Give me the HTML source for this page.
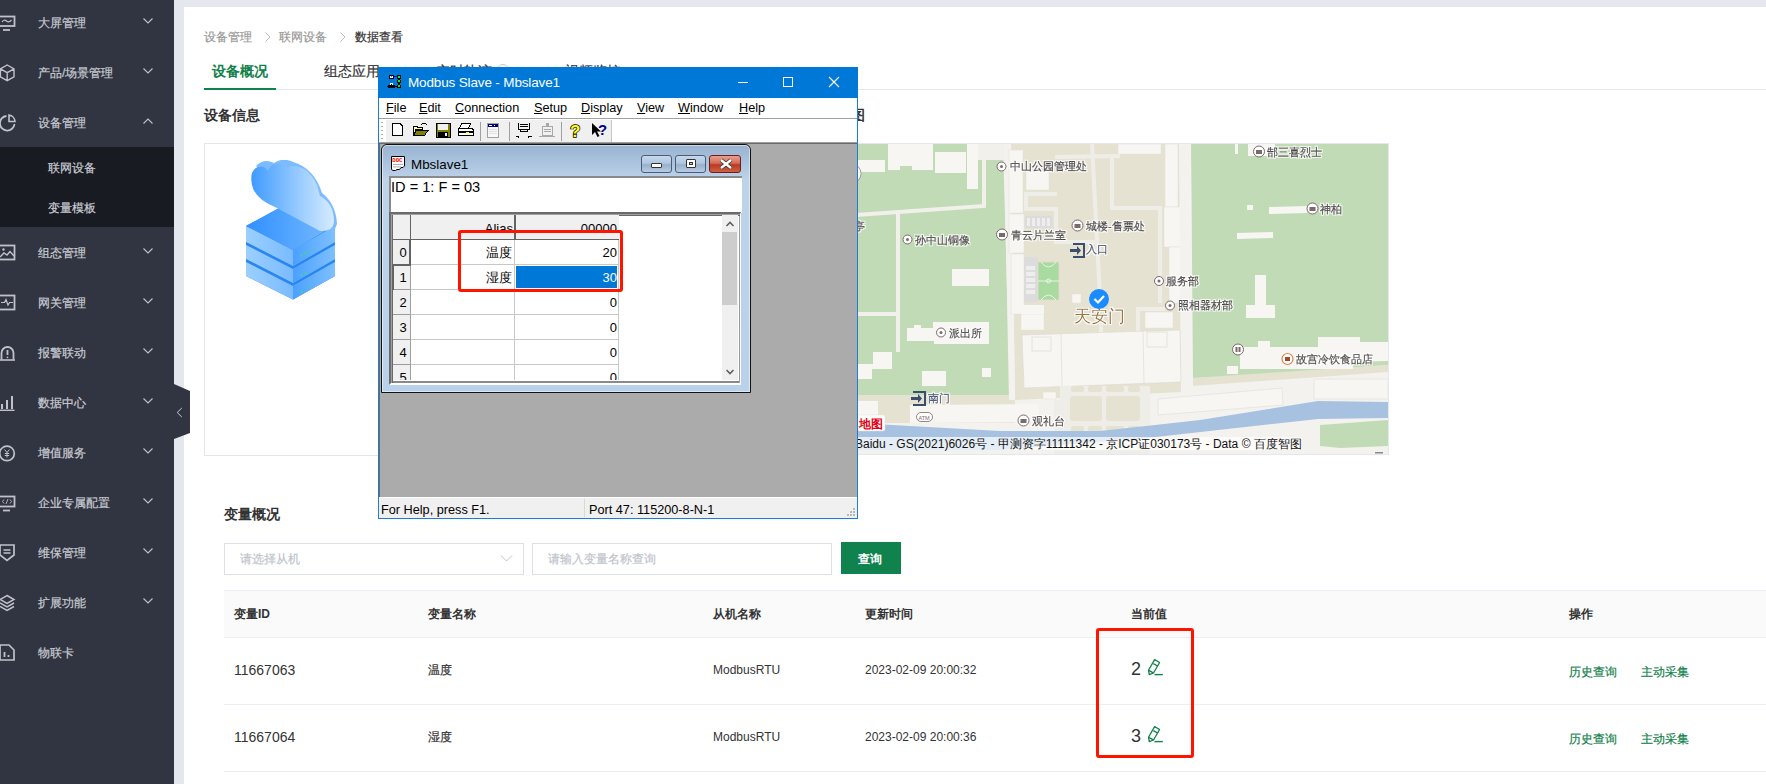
<!DOCTYPE html>
<html><head><meta charset="utf-8">
<style>
*{box-sizing:border-box}
html,body{margin:0;padding:0}
body{width:1766px;height:784px;overflow:hidden;position:relative;background:#e4e7ee;font-family:"Liberation Sans",sans-serif;color:#333}
.a{position:absolute;white-space:nowrap}
#side{position:absolute;left:0;top:0;width:174px;height:784px;background:#313541}
.mi{position:absolute;left:38px;font-size:12px;color:#c9ccd3;line-height:16px}
.chev{position:absolute;left:143px;width:10px;height:6px}
.ico{position:absolute;left:-1px;width:17px;height:17px}
#card{position:absolute;left:184px;top:7px;width:1582px;height:777px;background:#fff}
.th{top:606px;font-size:12px;font-weight:bold;color:#333}
.mn{top:101px;font-size:12.7px;color:#000}
.st{top:503px;font-size:12.7px;color:#000}
.cb{top:155px;width:31px;height:18px;border:1px solid #4a5c78;border-radius:3px;background:linear-gradient(#c8d8ec,#b0c6e0 45%,#98b0cc 55%,#b8cce4)}
.cj{-webkit-text-stroke:0.2px currentColor}
</style></head><body>
<div id="side">
  <div style="position:absolute;left:0;top:147px;width:174px;height:80px;background:#181b22"></div>
  
<svg class="a" style="left:0;top:0" width="174" height="784" viewBox="0 0 174 784" fill="none" stroke="#bfc2ca" stroke-width="1.6">
 <!-- chevrons -->
 <g stroke-width="1.1">
 <path d="M143.5,18.5 L148,23 L152.5,18.5"/>
 <path d="M143.5,68.5 L148,73 L152.5,68.5"/>
 <path d="M143.5,123.5 L148,119 L152.5,123.5"/>
 <path d="M143.5,248.5 L148,253 L152.5,248.5"/>
 <path d="M143.5,298.5 L148,303 L152.5,298.5"/>
 <path d="M143.5,348.5 L148,353 L152.5,348.5"/>
 <path d="M143.5,398.5 L148,403 L152.5,398.5"/>
 <path d="M143.5,448.5 L148,453 L152.5,448.5"/>
 <path d="M143.5,498.5 L148,503 L152.5,498.5"/>
 <path d="M143.5,548.5 L148,553 L152.5,548.5"/>
 <path d="M143.5,598.5 L148,603 L152.5,598.5"/>
 </g>
 <!-- monitor wave -->
 <rect x="-1" y="16.5" width="15.5" height="9.5" stroke-width="1.8"/>
 <path d="M2,22 Q4,19 6.5,21 Q9,23 11.5,20" stroke-width="1.2"/>
 <path d="M3,30 H10" stroke-width="1.8"/>
 <!-- cube -->
 <path d="M7.2,65 L14,68.8 V76.8 L7.2,80.6 L0.4,76.8 V68.8 Z M0.4,68.8 L7.2,72.6 L14,68.8 M7.2,72.6 V80.6" stroke-width="1.4"/>
 <!-- pie -->
 <path d="M6.5,116 A7.3,7.3 0 1 0 14.5,124" stroke-width="1.8"/>
 <path d="M9,115 V121.5 H15 A7,7 0 0 0 9,115 Z" stroke-width="1.6"/>
 <!-- image -->
 <rect x="-1" y="245.5" width="15.5" height="14" stroke-width="1.8"/>
 <circle cx="3.5" cy="249.5" r="1.2" fill="#bfc2ca" stroke="none"/>
 <path d="M0,257 L4,253 L7,255 L10,251.5 L14,256" stroke-width="1.4"/>
 <!-- pulse monitor -->
 <rect x="-1" y="295.5" width="15.5" height="14" stroke-width="1.8"/>
 <path d="M1,302.5 H4.5 L6,299.5 L8,305 L9.5,302.5 H13" stroke-width="1.2"/>
 <!-- alarm -->
 <path d="M1.5,359.5 V353 A6,6 0 0 1 13.5,353 V359.5" stroke-width="1.8"/>
 <path d="M-1,360 H15" stroke-width="1.6"/>
 <path d="M7.5,350 V355" stroke-width="1.8"/><circle cx="7.5" cy="357.3" r="0.9" fill="#bfc2ca" stroke="none"/>
 <!-- bars -->
 <path d="M2,409 V404 M7,409 V400 M12,409 V396" stroke-width="2"/>
 <path d="M-1,410.3 H14.5" stroke-width="1.4"/>
 <!-- yen circle -->
 <circle cx="7" cy="453.4" r="7.3" stroke-width="1.7"/>
 <path d="M4.5,449.5 L7,452.5 L9.5,449.5 M7,452.5 V457.5 M4.8,453.5 H9.2 M4.8,455.5 H9.2" stroke-width="1"/>
 <!-- code monitor -->
 <rect x="-1" y="496.5" width="15.5" height="10" stroke-width="1.8"/>
 <path d="M3,510.5 H10" stroke-width="1.8"/>
 <path d="M4,499.5 L2.5,501.5 L4,503.5 M10,499.5 L11.5,501.5 L10,503.5 M8,499 L6,504" stroke-width="0.9"/>
 <!-- shield -->
 <path d="M0,545 H14 V555 L7,560.5 L0,555 Z" stroke-width="1.7"/>
 <path d="M3.5,550 H10.5 M3.5,553 H10.5" stroke-width="1.3"/>
 <!-- layers -->
 <path d="M7,595.5 L14,599.5 L7,603.5 L0,599.5 Z" stroke-width="1.5"/>
 <path d="M0,603 L7,607 L14,603 M0,606.5 L7,610.5 L14,606.5" stroke-width="1.5"/>
 <!-- sim -->
 <path d="M0,645 H9 L14,650 V660 H0 Z" stroke-width="1.7"/>
 <path d="M4.5,652 V657 M8.5,655 V657" stroke-width="1.8"/>
</svg>
<div class="mi cj" style="top:15px">大屏管理</div>
  <div class="mi cj" style="top:65px">产品/场景管理</div>
  <div class="mi cj" style="top:115px">设备管理</div>
  <div class="mi cj" style="top:160px;left:48px">联网设备</div>
  <div class="mi cj" style="top:200px;left:48px">变量模板</div>
  <div class="mi cj" style="top:245px">组态管理</div>
  <div class="mi cj" style="top:295px">网关管理</div>
  <div class="mi cj" style="top:345px">报警联动</div>
  <div class="mi cj" style="top:395px">数据中心</div>
  <div class="mi cj" style="top:445px">增值服务</div>
  <div class="mi cj" style="top:495px">企业专属配置</div>
  <div class="mi cj" style="top:545px">维保管理</div>
  <div class="mi cj" style="top:595px">扩展功能</div>
  <div class="mi cj" style="top:645px">物联卡</div>
</div>

<div id="card"></div>
<!-- handle -->
<svg class="a" style="left:174px;top:384px" width="17" height="56" viewBox="0 0 17 56"><polygon points="0,0 16,7 16,49 0,55" fill="#313541"/><path d="M7.8,24 L3.2,28.5 L7.8,33" fill="none" stroke="#c9ccd3" stroke-width="1"/></svg>
<!-- breadcrumb -->
<div class="a cj" style="left:204px;top:29px;font-size:12px;color:#999">设备管理</div>
<svg class="a" style="left:264px;top:31px" width="8" height="12"><path d="M1.5,1.5 L6,6 L1.5,10.5" fill="none" stroke="#bbb" stroke-width="1"/></svg>
<div class="a cj" style="left:279px;top:29px;font-size:12px;color:#999">联网设备</div>
<svg class="a" style="left:339px;top:31px" width="8" height="12"><path d="M1.5,1.5 L6,6 L1.5,10.5" fill="none" stroke="#bbb" stroke-width="1"/></svg>
<div class="a cj" style="left:355px;top:29px;font-size:12px;color:#333">数据查看</div>
<!-- tabs -->
<div class="a" style="left:204px;top:89px;width:1562px;height:1px;background:#e4e7ed"></div>
<div class="a" style="left:204px;top:88px;width:72px;height:2px;background:#13814b"></div>
<div class="a" style="left:212px;top:62.5px;font-size:14px;font-weight:bold;color:#13814b">设备概况</div>
<div class="a cj" style="left:324px;top:63px;font-size:14px;color:#333">组态应用</div>
<div class="a cj" style="left:436px;top:63px;font-size:14px;color:#333">实时轨迹</div>
<div class="a" style="left:497px;top:64px;width:12px;height:12px;border-radius:6px;border:1.5px solid #c8c8c8"></div>
<div class="a cj" style="left:565px;top:63px;font-size:14px;color:#333">视频监控</div>
<div class="a" style="left:204px;top:107px;font-size:14px;font-weight:bold;color:#333">设备信息</div>
<div class="a" style="left:809px;top:107px;font-size:14px;font-weight:bold;color:#333">设备地图</div>
<!-- device box -->
<div class="a" style="left:204px;top:143px;width:652px;height:313px;border:1px solid #e6e6e6"></div>
<div class="a" style="left:855px;top:143px;width:534px;height:312px;border:1px solid #e4e6f0"></div>
<svg class="a" style="left:856px;top:144px" width="532" height="310" viewBox="856 144 532 310">
<defs>
<filter id="halo" x="-10%" y="-30%" width="120%" height="160%"><feMorphology in="SourceAlpha" operator="dilate" radius="1" result="d"/><feFlood flood-color="#fff" flood-opacity="0.9"/><feComposite in2="d" operator="in" result="w"/><feMerge><feMergeNode in="w"/><feMergeNode in="SourceGraphic"/></feMerge></filter>
</defs>
<!-- base off-white -->
<rect x="856" y="144" width="532" height="310" fill="#f4f2ee"/>
<!-- left green park -->
<polygon points="856,144 1003,144 1010,395 856,395" fill="#c1dbb7"/>
<!-- central beige -->
<polygon points="1011,144 1180,144 1181,392 1015,400" fill="#e6e2d2"/>
<!-- right green -->
<polygon points="1191,144 1388,144 1388,365 1224,377 1193,378" fill="#c1dbb7"/>
<!-- beige strips -->
<polygon points="1193,378 1388,365 1388,372 1193,386" fill="#e6e2d2"/>
<polygon points="856,395 1010,395 1015,400 1015,423 856,423" fill="#e6e2d2"/>
<!-- top-left off-white -->
<polygon points="978,144 1004,144 1004,160 978,160" fill="#f2f0eb"/>
<!-- left park buildings -->
<g fill="#f7f6f3">
<rect x="858" y="160" width="27" height="12"/>
<polygon points="888,144 933,144 933,170 912,170 912,166 900,166 900,170 888,170"/>
<rect x="935" y="152" width="31" height="21"/>
<rect x="967" y="144" width="11" height="45"/>
<rect x="952" y="269" width="37" height="17"/>
<polygon points="907,328 914,328 914,325 921,325 921,328 933,328 933,322 989,322 989,344 934,344 934,341 907,341"/>
<polygon points="873,352 892,352 892,369 872,369 872,379 858,379 858,364 873,364"/>
<rect x="922" y="371" width="24" height="15"/>
<rect x="982" y="368" width="9" height="9"/>
<rect x="858" y="401" width="20" height="15"/>
</g>
<!-- left park roads -->
<g stroke="#f2f0eb" stroke-width="4" fill="none">
<path d="M856,215 L984,206 L984,144"/>
<path d="M898,213 L898,352"/>
<path d="M856,314 L898,314"/>
</g>
<!-- column between green & beige -->
<polygon points="1004,144 1011,144 1015,400 1009,400" fill="#f4f2ee"/>
<g fill="#f7f6f3" stroke="#e4e0d6" stroke-width="0.5">
<rect x="1009" y="150" width="14" height="63"/>
<rect x="1009" y="214" width="15" height="39"/>
<rect x="1011" y="254" width="13" height="60"/>
<rect x="1021" y="314" width="23" height="16"/>
<rect x="1165" y="144" width="13" height="63"/>
<rect x="1164" y="207" width="17" height="40"/>
<rect x="1169" y="247" width="12" height="56"/>
<rect x="1026" y="171" width="23" height="19"/>
<rect x="1118" y="144" width="43" height="10"/>
<rect x="1072" y="294" width="9" height="9"/>
<rect x="1145" y="312" width="28" height="16"/>
<rect x="1043" y="392" width="13" height="7"/>
</g>
<!-- right strip off-white -->
<polygon points="1179,144 1185,144 1191,160 1192,378 1181,392" fill="#f4f2ee"/>
<!-- beige roads -->
<g stroke="#efede8" stroke-width="4" fill="none">
<path d="M1055,157 L1120,156"/>
<path d="M1092,144 L1100,298"/>
<path d="M1112,156 L1112,208 L1160,208 L1160,303"/>
<path d="M1057,194 L1026,194 L1026,209 L1056,209 L1056,242 L1097,242"/>
<path d="M1101,322 L1101,334"/>
<path d="M1138,332 L1138,309 L1165,309"/>
</g>
<!-- parking & court -->
<rect x="1025" y="216" width="27" height="12" fill="#dcdcdc"/>
<g fill="#eeeeee"><rect x="1027" y="218" width="3" height="8"/><rect x="1032" y="218" width="3" height="8"/><rect x="1037" y="218" width="3" height="8"/><rect x="1042" y="218" width="3" height="8"/><rect x="1047" y="218" width="3" height="8"/></g>
<rect x="1024" y="257" width="14" height="45" fill="#dcdcdc"/>
<g fill="#eeeeee"><rect x="1026" y="266" width="9" height="4"/><rect x="1026" y="272" width="9" height="4"/><rect x="1026" y="278" width="9" height="4"/><rect x="1026" y="284" width="9" height="4"/><rect x="1026" y="290" width="9" height="4"/></g>
<rect x="1038" y="262" width="21" height="38" fill="#a9dba0" stroke="#e8d8d0" stroke-width="0.8"/>
<g stroke="#fff" stroke-width="0.7" fill="none"><path d="M1038,281 H1059"/><circle cx="1048.5" cy="281" r="2"/><path d="M1041,262 Q1048.5,272 1056,262"/><path d="M1041,300 Q1048.5,290 1056,300"/></g>
<!-- big tiananmen building -->
<g fill="#f7f6f3" stroke="#dcd8cc" stroke-width="0.6">
<polygon points="1022,335 1180,330 1181,382 1024,388"/>
<path d="M1061,333 L1062,387" fill="none"/>
<path d="M1143,331 L1144,383" fill="none"/>
<rect x="1032" y="337" width="19" height="14"/>
<rect x="1147" y="332" width="20" height="15"/>
</g>
<!-- light road grid below -->
<rect x="1060" y="386" width="90" height="68" fill="#efede8"/>
<g fill="#e6e2d2">
<rect x="1071" y="386" width="13" height="6" rx="2"/><rect x="1088" y="386" width="14" height="6" rx="2"/><rect x="1106" y="386" width="18" height="6" rx="2"/><rect x="1128" y="386" width="12" height="6" rx="2"/>
<rect x="1070" y="396" width="32" height="25" rx="3"/><rect x="1106" y="396" width="34" height="25" rx="3"/>
<rect x="1071" y="426" width="13" height="8" rx="2"/><rect x="1088" y="426" width="14" height="8" rx="2"/><rect x="1106" y="426" width="18" height="8" rx="2"/><rect x="1128" y="426" width="12" height="8" rx="2"/>
</g>
<rect x="1054" y="400" width="6" height="54" fill="#efede8"/>
<!-- right green buildings -->
<g fill="#f7f6f3">
<rect x="1248" y="144" width="27" height="12"/>
<rect x="1235" y="144" width="3" height="10"/>
<rect x="1247" y="205" width="6" height="5"/>
<polygon points="1269,207 1307,206 1307,213 1269,214"/>
<polygon points="1237,233 1273,232 1273,238 1237,239"/>
<rect x="1255" y="275" width="11" height="30"/>
<rect x="1246" y="305" width="29" height="13"/>
<polygon points="1240,347 1258,347 1258,341 1270,341 1270,347 1318,347 1318,337 1360,337 1360,342 1388,342 1388,361 1353,362 1353,369 1240,369"/>
<rect x="1227" y="366" width="11" height="8"/>
<polygon points="1158,399 1282,388 1283,405 1158,415" stroke="#e0ddd5" stroke-width="0.6"/>
<rect x="1314" y="379" width="74" height="20" stroke="#e0ddd5" stroke-width="0.6"/>
<polygon points="910,405 1039,404 1039,422 910,423"/>
<rect x="1021" y="305" width="23" height="9"/>
</g>
<!-- river -->
<polygon points="856,423 1000,431 1100,431 1146,426 1200,420 1318,401 1388,402 1388,418 1318,419 1147,438 1000,450 856,450" fill="#a7c1e0"/>
<polygon points="1320,425 1388,420 1388,446 1340,448 1320,446" fill="#c1dbb7"/>
<!-- attribution band -->
<rect x="856" y="437" width="446" height="13" fill="#fff" fill-opacity="0.7"/>
<text x="855" y="448" font-family="Liberation Sans" font-size="12" fill="#111">Baidu - GS(2021)6026号 - 甲测资字11111342 - 京ICP证030173号 - Data © 百度智图</text>
<rect x="1375" y="452" width="8" height="1.5" fill="#888"/>
<!-- ditu logo -->
<rect x="857" y="415" width="28" height="16" rx="2" fill="#fff" stroke="#ddd" stroke-width="0.5"/>
<text x="859" y="428" font-family="Liberation Sans" font-weight="bold" font-size="11.5" fill="#e60012">地图</text>
<!-- map control circle (clipped) -->
<circle cx="851" cy="173.5" r="10" fill="#fff" stroke="#888" stroke-width="0.8"/>
<!-- POIs -->
<g fill="#fff" stroke="#7a6a6a" stroke-width="1">
<circle cx="1001.5" cy="166.5" r="4.5"/><circle cx="907.5" cy="239.5" r="4.5"/><circle cx="941" cy="332.5" r="4.5"/>
<circle cx="1159" cy="281" r="4.5"/><circle cx="1170" cy="305.5" r="4.5"/>
<circle cx="1002" cy="234.5" r="5.5"/><circle cx="1077.5" cy="225.5" r="5.5"/><circle cx="1259" cy="151.5" r="5.5"/><circle cx="1312.5" cy="208.5" r="5.5"/><circle cx="1023.5" cy="420.5" r="5.5"/><circle cx="1238" cy="349.5" r="5.5"/>
</g>
<g fill="#7a6a6a"><circle cx="1001.5" cy="166.5" r="1.5"/><circle cx="907.5" cy="239.5" r="1.5"/><circle cx="941" cy="332.5" r="1.5"/><circle cx="1159" cy="281" r="1.5"/><circle cx="1170" cy="305.5" r="1.5"/>
<rect x="999" y="233" width="6" height="4"/><rect x="1074.5" y="224" width="6" height="4"/><rect x="1256" y="150" width="6" height="4"/><rect x="1309.5" y="207" width="6" height="4"/><rect x="1020.5" y="419" width="6" height="4"/><rect x="1235.5" y="347" width="2" height="5"/><rect x="1238.5" y="347" width="2" height="5"/></g>
<circle cx="1287.5" cy="359" r="5.5" fill="#fff" stroke="#d9824a" stroke-width="1.2"/><rect x="1285" y="357" width="5" height="4" fill="#a04a2a"/>
<rect x="916.5" y="412.5" width="16" height="9" rx="4.5" fill="#fff" stroke="#7a6a6a" stroke-width="0.8"/>
<text x="918.5" y="419.5" font-family="Liberation Sans" font-size="5.5" fill="#7a6a6a">ATM</text>
<!-- entrance icons -->
<g fill="none" stroke="#3c4e6e" stroke-width="2"><path d="M1073,244 H1084 V257 H1073"/><path d="M913,392 H925 V405 H913"/></g>
<g fill="#3c4e6e"><path d="M1070,249 H1077 V246 L1081,250.5 L1077,255 V252 H1070 Z"/><path d="M911,397 H918 V394 L922,398.5 L918,403 V400 H911 Z"/></g>
<!-- labels -->
<g font-family="Liberation Sans" font-size="11" fill="#4a4242" stroke="#4a4242" stroke-width="0.35" filter="url(#halo)">
<text x="1010" y="170">中山公园管理处</text>
<text x="915" y="243.5">孙中山铜像</text>
<text x="1011" y="238.5">青云片兰室</text>
<text x="1086" y="229.5">城楼-售票处</text>
<text x="1267" y="155.5">郜三喜烈士</text>
<text x="1320" y="212.5">神柏</text>
<text x="1166" y="285">服务部</text>
<text x="1178" y="309">照相器材部</text>
<text x="949" y="336.5">派出所</text>
<text x="1032" y="424.5">观礼台</text>
<text x="1296" y="362.5">故宫冷饮食品店</text>
<text x="854" y="229.5">亭</text>
<text x="1086" y="253" fill="#4a5a7a" stroke="#4a5a7a">入口</text>
<text x="928" y="401.5" fill="#4a5a7a" stroke="#4a5a7a">南门</text>
</g>
<text x="1074" y="321.5" font-family="Liberation Sans" font-size="17" fill="#9c7430" filter="url(#halo)">天安门</text>
<circle cx="1099" cy="299" r="10" fill="#1a8cff"/>
<path d="M1094.5,299 L1098,302.5 L1104,296" fill="none" stroke="#fff" stroke-width="2.2"/>
</svg>


<svg class="a" style="left:244px;top:160px" width="94" height="142" viewBox="244 160 94 142">
<defs>
<linearGradient id="gTop" x1="0" y1="0" x2="1" y2="0"><stop offset="0" stop-color="#2f90ff"/><stop offset="1" stop-color="#78bbff"/></linearGradient>
<linearGradient id="gL" x1="0" y1="0" x2="1" y2="0"><stop offset="0" stop-color="#9ccfff"/><stop offset="1" stop-color="#5aaaff"/></linearGradient>
<linearGradient id="gR" x1="0" y1="0" x2="1" y2="0"><stop offset="0" stop-color="#4aa0ff"/><stop offset="1" stop-color="#7fc0ff"/></linearGradient>
<linearGradient id="gC" x1="0" y1="0" x2="1" y2="0"><stop offset="0" stop-color="#3f9bff"/><stop offset="0.6" stop-color="#9ccdff"/><stop offset="1" stop-color="#d6ebff"/></linearGradient>
</defs>
<!-- slabs from bottom -->
<g>
 <path d="M246,226 L290,202 L335,225 V276 L293,299.5 L246,276 Z" fill="#2a86f0"/>
 <path d="M246,262 L293,286 L335,262 V276 L293,299.5 L246,276 Z" fill="url(#gL)"/>
 <path d="M293,286 L335,262 V276 L293,299.5 Z" fill="url(#gR)"/>
 <path d="M246,245 L293,269 L335,245 V259 L293,283 L246,259 Z" fill="url(#gL)"/>
 <path d="M293,269 L335,245 V259 L293,283 Z" fill="url(#gR)"/>
 <path d="M246,226 L293,250 L335,226 V242 L293,266 L246,242 Z" fill="url(#gL)"/>
 <path d="M293,250 L335,226 V242 L293,266 Z" fill="url(#gR)"/>
 <path d="M246,226 L290,202 L335,225 L293,250 Z" fill="url(#gTop)"/>
</g>
<g fill="#3ddc84">
 <circle cx="301.5" cy="255.5" r="1.1"/><circle cx="305.5" cy="253.3" r="1.1"/><circle cx="309.5" cy="251" r="1.1"/>
 <circle cx="301.5" cy="275" r="1.1"/><circle cx="305.5" cy="273" r="1.1"/>
 <circle cx="301.5" cy="291.5" r="1.1"/><circle cx="309.5" cy="287.5" r="1.1"/>
</g>
<!-- cloud side thickness -->
<path d="M256,166 Q264,158 274,163 Q283,157 293,162 Q314,168 322,193 Q336,204 337,224 L335,229 L321,228 Z" fill="#7dbbff"/>
<!-- cloud front -->
<path d="M275,207 Q255,199 252,185 Q249,170 258,167 Q265,165 268,171 Q272,161 282,165 Q286,165 287,167 Q306,162 317,185 Q319,192 320,196 Q334,203 334,222 Q333,232 320,231 Z" fill="url(#gC)"/>
</svg>

<!-- section 2 -->
<div class="a" style="left:224px;top:506px;font-size:14px;font-weight:bold;color:#333">变量概况</div>
<div class="a" style="left:224px;top:543px;width:300px;height:32px;border:1px solid #dcdfe6"></div>
<div class="a cj" style="left:240px;top:551px;font-size:12px;color:#c0c4cc">请选择从机</div>
<svg class="a" style="left:500px;top:554px" width="13" height="9"><path d="M1,1.5 L6.5,7 L12,1.5" fill="none" stroke="#c0c4cc" stroke-width="1"/></svg>
<div class="a" style="left:532px;top:543px;width:300px;height:32px;border:1px solid #dcdfe6"></div>
<div class="a cj" style="left:548px;top:551px;font-size:12px;color:#c0c4cc">请输入变量名称查询</div>
<div class="a" style="left:841px;top:542px;width:60px;height:32px;background:#10824d"></div>
<div class="a" style="left:858px;top:551px;font-size:12px;font-weight:bold;color:#fff">查询</div>
<!-- table -->
<div class="a" style="left:224px;top:590px;width:1542px;height:48px;background:#fafafa;border-top:1px solid #ebeef5;border-bottom:1px solid #ebeef5"></div>
<div class="a" style="left:224px;top:704px;width:1542px;height:1px;background:#ebeef5"></div>
<div class="a" style="left:224px;top:771px;width:1542px;height:1px;background:#ebeef5"></div>
<div class="a th" style="left:234px">变量ID</div>
<div class="a th" style="left:428px">变量名称</div>
<div class="a th" style="left:713px">从机名称</div>
<div class="a th" style="left:865px">更新时间</div>
<div class="a th" style="left:1131px">当前值</div>
<div class="a th" style="left:1569px">操作</div>
<div class="a" style="left:234px;top:662px;font-size:14px;color:#333">11667063</div>
<div class="a cj" style="left:428px;top:662px;font-size:12px;color:#333">温度</div>
<div class="a" style="left:713px;top:663px;font-size:12px;color:#333">ModbusRTU</div>
<div class="a" style="left:865px;top:663px;font-size:12px;color:#333">2023-02-09 20:00:32</div>
<div class="a" style="left:1131px;top:659px;font-size:18px;color:#333">2</div>
<div class="a cj" style="left:1569px;top:664px;font-size:12px;color:#13814b">历史查询</div>
<div class="a cj" style="left:1641px;top:664px;font-size:12px;color:#13814b">主动采集</div>
<div class="a" style="left:234px;top:729px;font-size:14px;color:#333">11667064</div>
<div class="a cj" style="left:428px;top:729px;font-size:12px;color:#333">湿度</div>
<div class="a" style="left:713px;top:730px;font-size:12px;color:#333">ModbusRTU</div>
<div class="a" style="left:865px;top:730px;font-size:12px;color:#333">2023-02-09 20:00:36</div>
<div class="a" style="left:1131px;top:726px;font-size:18px;color:#333">3</div>
<div class="a cj" style="left:1569px;top:731px;font-size:12px;color:#13814b">历史查询</div>
<div class="a cj" style="left:1641px;top:731px;font-size:12px;color:#13814b">主动采集</div>

<svg class="a" style="left:1144px;top:656px" width="22" height="22" viewBox="1144 656 22 22" fill="none" stroke="#13814b" stroke-width="1.3" stroke-linejoin="round">
 <path d="M1154.6,659.6 L1159.6,662.5 L1153.5,673 L1149.3,674.6 L1148.5,670.2 Z"/>
 <path d="M1153.3,663.6 L1158.1,666.3"/>
 <path d="M1148.7,670.4 L1153.3,672.8"/>
 <path d="M1154.5,674.6 H1162.8" stroke-width="1.4"/>
</svg>

<svg class="a" style="left:1144px;top:723px" width="22" height="22" viewBox="1144 656 22 22" fill="none" stroke="#13814b" stroke-width="1.3" stroke-linejoin="round">
 <path d="M1154.6,659.6 L1159.6,662.5 L1153.5,673 L1149.3,674.6 L1148.5,670.2 Z"/>
 <path d="M1153.3,663.6 L1158.1,666.3"/>
 <path d="M1148.7,670.4 L1153.3,672.8"/>
 <path d="M1154.5,674.6 H1162.8" stroke-width="1.4"/>
</svg>
<div class="a" style="left:1096px;top:628px;width:98px;height:130px;border:3px solid #ff1400;border-radius:3px"></div>


<!-- MODBUS WINDOW -->
<div id="mw" class="a" style="left:378px;top:67px;width:480px;height:452px;background:#fff;border:1px solid #1a7fd4">
</div>
<div class="a" style="left:378px;top:67px;width:480px;height:31px;background:#0078d7"></div>
<svg class="a" style="left:386px;top:74px" width="16" height="16" viewBox="386 74 16 16" shape-rendering="crispEdges">
 <rect x="393" y="76" width="5" height="1" fill="#0000ff"/>
 <rect x="398" y="78" width="2" height="9" fill="#000"/>
 <rect x="389" y="75" width="5" height="4" fill="#000"/><rect x="390" y="76" width="3" height="2" fill="#fff"/><rect x="391" y="76" width="1" height="1" fill="#0c0"/>
 <rect x="397" y="75" width="4" height="4" fill="#000"/><rect x="398" y="76" width="2" height="2" fill="#0f0"/>
 <rect x="397" y="80" width="4" height="3" fill="#000"/><rect x="398" y="80" width="2" height="2" fill="#0f0"/>
 <rect x="397" y="85" width="4" height="3" fill="#000"/><rect x="398" y="85" width="2" height="2" fill="#0f0"/>
 <rect x="390" y="83" width="3" height="2" fill="#fff"/>
 <rect x="388" y="85" width="7" height="3" fill="#000"/><rect x="387" y="86" width="10" height="1" fill="#000"/><rect x="391" y="84" width="1" height="1" fill="#000"/>
</svg>
<div class="a" style="left:408px;top:75px;font-size:13.5px;color:#fff;letter-spacing:-0.15px">Modbus Slave - Mbslave1</div>
<div class="a" style="left:738px;top:82px;width:10px;height:1px;background:#fff"></div>
<div class="a" style="left:783px;top:77px;width:10px;height:10px;border:1px solid #fff"></div>
<svg class="a" style="left:828px;top:76px" width="12" height="12"><path d="M1,1 L11,11 M11,1 L1,11" stroke="#fff" stroke-width="1.1"/></svg>
<!-- menu -->
<div class="a mn" style="left:386px"><u>F</u>ile</div>
<div class="a mn" style="left:419px"><u>E</u>dit</div>
<div class="a mn" style="left:455px"><u>C</u>onnection</div>
<div class="a mn" style="left:534px"><u>S</u>etup</div>
<div class="a mn" style="left:581px"><u>D</u>isplay</div>
<div class="a mn" style="left:637px"><u>V</u>iew</div>
<div class="a mn" style="left:678px"><u>W</u>indow</div>
<div class="a mn" style="left:739px"><u>H</u>elp</div>
<div class="a" style="left:379px;top:118px;width:478px;height:1px;background:#a0a0a0"></div>
<!-- toolbar -->
<div class="a" style="left:386px;top:120px;width:226px;height:23px;background:#f0f0f0;border-right:1px solid #c8c8c8"></div>
<svg class="a" style="left:380px;top:120px" width="5" height="24"><g fill="#b0b0b0"><rect x="1" y="2" width="2" height="1"/><rect x="1" y="6" width="2" height="1"/><rect x="1" y="10" width="2" height="1"/><rect x="1" y="14" width="2" height="1"/><rect x="1" y="18" width="2" height="1"/><rect x="1" y="22" width="2" height="1"/></g></svg>
<svg class="a" style="left:386px;top:120px" width="226" height="23" viewBox="386 120 226 23" shape-rendering="crispEdges">
 <!-- new -->
 <path d="M392.5,123.5 H400 L402.5,126 V135.5 H392.5 Z" fill="#fff" stroke="#000" stroke-width="1"/>
 <!-- open -->
 <path d="M413.5,126.5 H417 L418,127.5 H422 V129.5 H416 L413.5,135.5 Z" fill="#ffff80" stroke="#000"/>
 <path d="M413.5,135.5 L416.5,130.5 H428 L424.5,135.5 Z" fill="#808000" stroke="#000"/>
 <path d="M421,125 Q424,122 427,125" fill="none" stroke="#000"/>
 <!-- save -->
 <rect x="436" y="123" width="14" height="14" fill="#808000"/>
 <rect x="438" y="124" width="10" height="6" fill="#f0f0f0"/>
 <rect x="438" y="132" width="10" height="5" fill="#000"/>
 <rect x="445" y="133" width="2" height="3" fill="#f0f0f0"/>
 <rect x="436" y="123" width="14" height="14" fill="none" stroke="#000" stroke-width="1"/>
 <!-- print -->
 <path d="M461.5,123.5 H470.5 L468.5,128.5 H459.5 Z" fill="#fff" stroke="#000"/>
 <path d="M458.5,128.5 H472.5 L473.5,130.5 V135.5 H458.5 Z" fill="#fff" stroke="#000"/>
 <rect x="458" y="131" width="15" height="2" fill="#000"/>
 <rect x="466" y="132" width="3" height="1" fill="#ff0"/>
 <!-- sep -->
 <rect x="480" y="122" width="1" height="19" fill="#a0a0a0"/>
 <!-- window -->
 <rect x="487.5" y="123.5" width="11" height="14" fill="#f8f8f8" stroke="#a0a0a0"/>
 <rect x="488" y="124" width="10" height="3" fill="#000080"/>
 <rect x="489" y="125" width="3" height="1" fill="#fff"/><rect x="494" y="125" width="1" height="1" fill="#fff"/>
 <rect x="489" y="129" width="8" height="1" fill="#e0e0e0"/><rect x="489" y="131" width="8" height="1" fill="#e0e0e0"/><rect x="489" y="133" width="8" height="1" fill="#e0e0e0"/>
 <rect x="509" y="122" width="1" height="19" fill="#a0a0a0"/>
 <!-- connect -->
 <path d="M518.5,123 V129.5 H529.5 V123" fill="none" stroke="#000"/>
 <rect x="520" y="124" width="8" height="1" fill="#000"/><rect x="520" y="126" width="8" height="1" fill="#000"/>
 <path d="M520.5,130 V131.5 H527.5 V130" fill="none" stroke="#000"/>
 <rect x="516" y="136" width="3" height="1" fill="#000"/><rect x="518" y="136" width="1" height="2" fill="#000"/>
 <rect x="528" y="136" width="4" height="1" fill="#000"/><rect x="528" y="136" width="1" height="2" fill="#000"/>
 <!-- disconnect grayed -->
 <rect x="546" y="123" width="3" height="3" fill="#a8a8a8"/>
 <path d="M542.5,126.5 H552.5 V135.5 H542.5 Z" fill="none" stroke="#a8a8a8"/>
 <rect x="544" y="129" width="7" height="1" fill="#a8a8a8"/><rect x="544" y="131" width="7" height="1" fill="#a8a8a8"/>
 <rect x="539" y="136" width="16" height="1" fill="#a8a8a8"/>
 <rect x="561" y="122" width="1" height="19" fill="#a0a0a0"/>
</svg>
<svg class="a" style="left:569px;top:122px" width="42" height="18" viewBox="0 0 42 18">
 <text x="1" y="15" font-family="Liberation Sans" font-weight="bold" font-size="17" fill="#ff0" stroke="#000" stroke-width="1.4" paint-order="stroke">?</text>
 <path d="M23,1 L23,13 L26,10 L28.5,15 L30.5,14 L28,9.5 L32,9.5 Z" fill="#000"/>
 <text x="29" y="13" font-family="Liberation Sans" font-weight="bold" font-size="15" fill="#00008b">?</text>
</svg>
<!-- MDI -->
<div class="a" style="left:379px;top:143px;width:478px;height:354px;background:#ababab;border-top:1px solid #696969;border-left:1px solid #696969"></div>
<div class="a" style="left:379px;top:142px;width:478px;height:1px;background:#a0a0a0"></div>
<!-- status -->
<div class="a" style="left:379px;top:497px;width:478px;height:21px;background:#f0f0f0;border-top:1px solid #fff"></div>
<div class="a" style="left:584px;top:499px;width:1px;height:18px;background:#d8d8d8"></div>
<div class="a st" style="left:381px">For Help, press F1.</div>
<div class="a st" style="left:589px">Port 47: 115200-8-N-1</div>
<svg class="a" style="left:845px;top:506px" width="11" height="11"><g fill="#b8b8b8"><rect x="8" y="2" width="2" height="2"/><rect x="5" y="5" width="2" height="2"/><rect x="8" y="5" width="2" height="2"/><rect x="2" y="8" width="2" height="2"/><rect x="5" y="8" width="2" height="2"/><rect x="8" y="8" width="2" height="2"/></g></svg>
<!-- CHILD -->
<div class="a" style="left:381px;top:144px;width:370px;height:249px;border:1px solid #111;border-top-left-radius:6px;border-top-right-radius:6px;background:linear-gradient(#98b3d1,#bdd3ea 35px,#b9d1ea)"></div>
<div class="a" style="left:382px;top:145px;width:368px;height:247px;border:1px solid rgba(255,255,255,0.5);border-top-left-radius:5px;border-top-right-radius:5px"></div>
<svg class="a" style="left:390px;top:155px" width="17" height="17" viewBox="0 0 17 17">
 <path d="M1.5,1.5 H14.5 V11 L13,12.5 H11 L9.5,14.5 H7 L5.5,15.5 H3 L1.5,14.5 Z" fill="#fff" stroke="#000" stroke-width="1"/>
 <text x="2.3" y="7" font-family="Liberation Mono" font-weight="bold" font-size="5.6" fill="#f00">DOC</text>
 <rect x="3" y="9" width="10" height="0.8" fill="#999"/><rect x="3" y="11.5" width="8" height="0.8" fill="#999"/>
</svg>
<div class="a" style="left:411px;top:157px;font-size:13.4px;color:#000">Mbslave1</div>
<div class="a cb" style="left:641px"><div style="position:absolute;left:9px;top:7px;width:11px;height:5px;background:#fff;border:1px solid #333;border-radius:1px"></div></div>
<div class="a cb" style="left:675px"><div style="position:absolute;left:10px;top:3px;width:10px;height:9px;background:#fff;border:1px solid #333;border-radius:1px"><div style="position:absolute;left:2px;top:2px;width:4px;height:3px;border:1px solid #333;background:#bcd"></div></div></div>
<div class="a cb" style="left:709px;width:32px;border-color:#6a2020;background:linear-gradient(#e8a090,#d46a55 45%,#b83a22 55%,#d06040)"><svg style="position:absolute;left:9px;top:2px" width="14" height="12"><path d="M2,2 L12,10 M12,2 L2,10" stroke="#333" stroke-width="4"/><path d="M2,2 L12,10 M12,2 L2,10" stroke="#fff" stroke-width="2.4"/></svg></div>
<!-- info panel -->
<div class="a" style="left:389px;top:176px;width:353px;height:37px;background:#fff;border-top:2px solid #8a8a8a;border-left:2px solid #8a8a8a"></div>
<div class="a" style="left:391px;top:179px;font-size:14.6px;color:#000">ID = 1: F = 03</div>
<!-- grid -->
<div class="a" style="left:389px;top:212px;width:352px;height:173px;background:#fff;border-top:2px solid #6b6b6b;border-left:2px solid #6b6b6b;border-right:1px solid #fff;border-bottom:2px solid #fff;box-shadow:inset 1px 1px 0 #a0a0a0, inset 2px 2px 0 #696969, inset -1px 0 0 #9a9a9a, inset 0 -2px 0 #8a8a8a"></div>
<div class="a" style="left:392px;top:214px;width:348px;height:166px;overflow:hidden">
<div style="position:absolute;left:1px;top:1px;width:226px;height:24px;background:#f0f0f0;"></div>
<div style="position:absolute;left:1px;top:25px;width:17px;height:150px;background:#f0f0f0;"></div>
<div style="position:absolute;left:1px;top:25px;width:226px;height:1px;background:#646464;"></div>
<div style="position:absolute;left:18px;top:1px;width:1px;height:24px;background:#646464;"></div>
<div style="position:absolute;left:122px;top:1px;width:2px;height:24px;background:#646464;"></div>
<div style="position:absolute;left:226px;top:1px;width:1px;height:24px;background:#f0f0f0;"></div>
<div style="position:absolute;left:18px;top:26px;width:1px;height:150px;background:#a0a0a0;"></div>
<div style="position:absolute;left:122px;top:26px;width:1px;height:150px;background:#c8c8c8;"></div>
<div style="position:absolute;left:226px;top:26px;width:1px;height:150px;background:#c8c8c8;"></div>
<div style="position:absolute;left:19px;top:50px;width:208px;height:1px;background:#c8c8c8;"></div>
<div style="position:absolute;left:1px;top:50px;width:17px;height:1px;background:#9a9a9a;"></div>
<div style="position:absolute;left:19px;top:75px;width:208px;height:1px;background:#c8c8c8;"></div>
<div style="position:absolute;left:1px;top:75px;width:17px;height:1px;background:#9a9a9a;"></div>
<div style="position:absolute;left:19px;top:100px;width:208px;height:1px;background:#c8c8c8;"></div>
<div style="position:absolute;left:1px;top:100px;width:17px;height:1px;background:#9a9a9a;"></div>
<div style="position:absolute;left:19px;top:125px;width:208px;height:1px;background:#c8c8c8;"></div>
<div style="position:absolute;left:1px;top:125px;width:17px;height:1px;background:#9a9a9a;"></div>
<div style="position:absolute;left:19px;top:150px;width:208px;height:1px;background:#c8c8c8;"></div>
<div style="position:absolute;left:1px;top:150px;width:17px;height:1px;background:#9a9a9a;"></div>
<div style="position:absolute;left:19px;top:175px;width:208px;height:1px;background:#c8c8c8;"></div>
<div style="position:absolute;left:1px;top:175px;width:17px;height:1px;background:#9a9a9a;"></div>
<div style="position:absolute;left:17px;top:26px;width:2px;height:25px;background:#646464;"></div>
<div style="position:absolute;left:1px;top:50px;width:18px;height:2px;background:#646464;"></div>
<div style="position:absolute;left:0px;top:51px;width:2px;height:25px;background:#646464;"></div>
<div style="position:absolute;left:124px;top:52px;width:101px;height:22px;background:#0078d7;"></div>
<div style="position:absolute;left:21px;top:7px;width:100px;text-align:right;font-size:13px;color:#000;white-space:nowrap;line-height:15px">Alias</div>
<div style="position:absolute;left:125px;top:7px;width:100px;text-align:right;font-size:13px;color:#000;white-space:nowrap;line-height:15px">00000</div>
<div style="position:absolute;left:3px;top:31px;width:16px;text-align:center;font-size:13px;color:#000;white-space:nowrap;line-height:15px">0</div>
<div style="position:absolute;left:20px;top:31px;width:100px;text-align:right;font-size:13px;color:#000;white-space:nowrap;line-height:15px">温度</div>
<div style="position:absolute;left:125px;top:31px;width:100px;text-align:right;font-size:13px;color:#000;white-space:nowrap;line-height:15px">20</div>
<div style="position:absolute;left:3px;top:56px;width:16px;text-align:center;font-size:13px;color:#000;white-space:nowrap;line-height:15px">1</div>
<div style="position:absolute;left:20px;top:56px;width:100px;text-align:right;font-size:13px;color:#000;white-space:nowrap;line-height:15px">湿度</div>
<div style="position:absolute;left:125px;top:56px;width:100px;text-align:right;font-size:13px;color:#fff;white-space:nowrap;line-height:15px">30</div>
<div style="position:absolute;left:3px;top:81px;width:16px;text-align:center;font-size:13px;color:#000;white-space:nowrap;line-height:15px">2</div>
<div style="position:absolute;left:125px;top:81px;width:100px;text-align:right;font-size:13px;color:#000;white-space:nowrap;line-height:15px">0</div>
<div style="position:absolute;left:3px;top:106px;width:16px;text-align:center;font-size:13px;color:#000;white-space:nowrap;line-height:15px">3</div>
<div style="position:absolute;left:125px;top:106px;width:100px;text-align:right;font-size:13px;color:#000;white-space:nowrap;line-height:15px">0</div>
<div style="position:absolute;left:3px;top:131px;width:16px;text-align:center;font-size:13px;color:#000;white-space:nowrap;line-height:15px">4</div>
<div style="position:absolute;left:125px;top:131px;width:100px;text-align:right;font-size:13px;color:#000;white-space:nowrap;line-height:15px">0</div>
<div style="position:absolute;left:3px;top:156px;width:16px;text-align:center;font-size:13px;color:#000;white-space:nowrap;line-height:15px">5</div>
<div style="position:absolute;left:125px;top:156px;width:100px;text-align:right;font-size:13px;color:#000;white-space:nowrap;line-height:15px">0</div>
<div style="position:absolute;left:330px;top:1px;width:16px;height:166px;background:#f0f0f0;"></div>
<div style="position:absolute;left:330px;top:18px;width:15px;height:73px;background:#cdcdcd;"></div>
<svg style="position:absolute;left:333px;top:6px" width="10" height="8"><path d="M1.5,6 L5,2.5 L8.5,6" fill="none" stroke="#606060" stroke-width="1.6"/></svg>
<svg style="position:absolute;left:333px;top:154px" width="10" height="8"><path d="M1.5,2 L5,5.5 L8.5,2" fill="none" stroke="#606060" stroke-width="1.6"/></svg>
</div>
<div class="a" style="left:458px;top:230px;width:165px;height:62px;border:3px solid #ff1400;border-radius:3px"></div>
</body></html>
